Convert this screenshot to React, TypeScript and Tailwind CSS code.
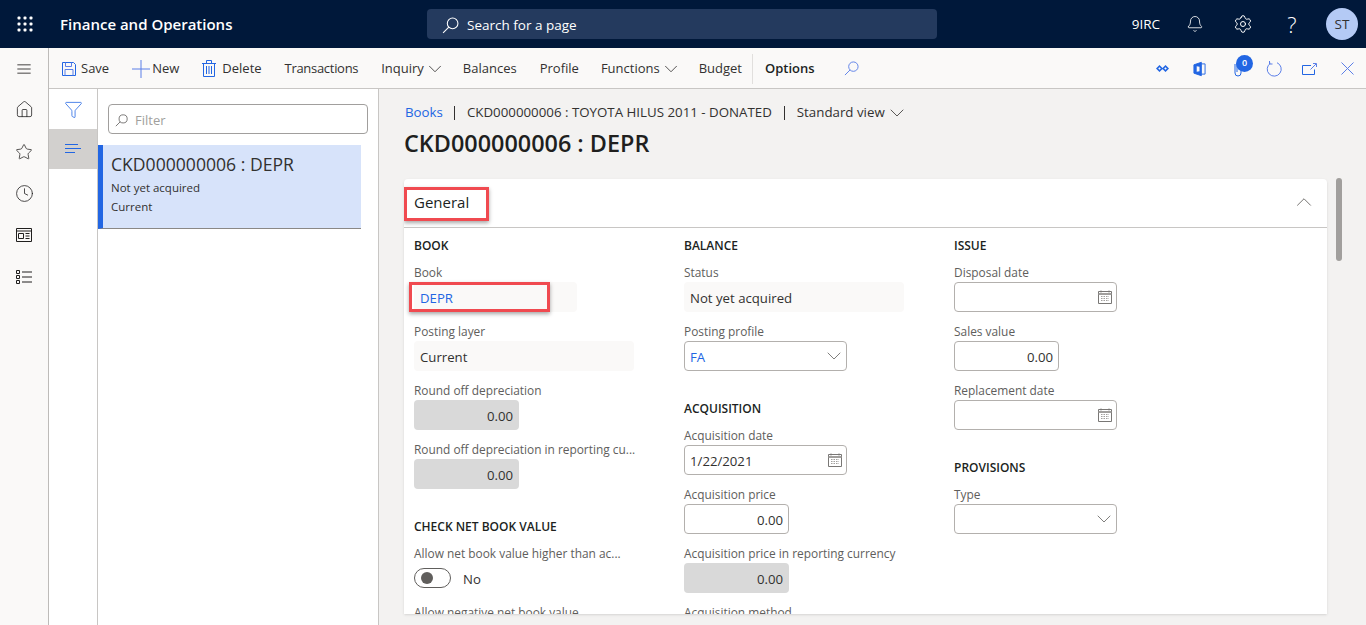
import { Bell, ChevronDown, ChevronUp, Clock, Filter, Home, Settings, Star } from "lucide-react";
import type { ReactNode } from "react";

function SearchGlyph({ className }: { className?: string }) {
  return (
    <svg viewBox="0 0 16 16" fill="none" stroke="currentColor" strokeWidth="1" className={className}>
      <circle cx="10" cy="6" r="5" />
      <path d="M6.4 9.6 1 15" />
    </svg>
  );
}

function Waffle() {
  const dots = [3, 9, 15];
  return (
    <svg viewBox="0 0 18 18" className="h-[18px] w-[18px] fill-white">
      {dots.map((y) => dots.map((x) => <rect key={`${x}-${y}`} x={x - 1.5} y={y - 1.5} width="3" height="3" rx="1" />))}
    </svg>
  );
}

function CalendarGlyph() {
  return (
    <svg viewBox="0 0 14 14" className="h-[14px] w-[14px] shrink-0 stroke-[#797775]" fill="none">
      <path d="M.5 1.500h13v12H.5z" />
      <path d="M.5 4h13" strokeWidth="2" stroke="#a19f9d" />
      <path d="M3 .5v2M11 .5v2" />
      <path d="M3 6.500h8M3 8.500h8M3 10.500h8" stroke="#a19f9d" strokeDasharray="1.500 1" />
    </svg>
  );
}

function Heading({ children, first }: { children: ReactNode; first?: boolean }) {
  return (
    <div
      className={`mb-2 h-[18px] text-[12px] font-semibold uppercase leading-[20px] text-[#201f1e] ${first ? "" : "mt-[28px]"}`}
    >
      {children}
    </div>
  );
}

function Label({ children }: { children: ReactNode }) {
  return <div className="h-5 whitespace-nowrap text-[11.9px] leading-5 text-[#605e5c]">{children}</div>;
}

function ReadOnly({ label, value, width, link }: { label: string; value: string; width: string; link?: boolean }) {
  return (
    <div className="mb-[9px]">
      <Label>{label}</Label>
      <div className={`flex h-[30px] items-center rounded-sm bg-[#faf9f8] px-1.5 pt-[3px] text-[13.2px] ${width} ${link ? "text-[#2266e3]" : "text-[#323130]"}`}>
        {value}
      </div>
    </div>
  );
}

function Disabled({ label }: { label: string }) {
  return (
    <div className="mb-[9px]">
      <Label>{label}</Label>
      <div className="flex h-[30px] w-[105px] items-center justify-end rounded-sm bg-[#d9d9d9] px-1.5 pt-[3px] text-[13.2px] text-[#323130]">
        0.00
      </div>
    </div>
  );
}

function Amount({ label }: { label: string }) {
  return (
    <div className="mb-[9px]">
      <Label>{label}</Label>
      <div className="flex h-[30px] w-[105px] items-center justify-end rounded-sm border border-[#b3b0ad] bg-white px-[5px] pt-[3px] text-[13.2px] text-[#323130]">
        0.00
      </div>
    </div>
  );
}

function DateField({ label, value }: { label: string; value?: string }) {
  return (
    <div className="mb-[9px]">
      <Label>{label}</Label>
      <div className="flex h-[30px] w-[163px] items-center justify-between rounded-sm border border-[#b3b0ad] bg-white pl-[5px] pr-[4px] text-[13.2px] text-[#323130]">
        <span className="pt-[3px]">{value}</span>
        <CalendarGlyph />
      </div>
    </div>
  );
}

function SelectField({ label, value }: { label: string; value?: string }) {
  return (
    <div className="mb-[9px]">
      <Label>{label}</Label>
      <div className="flex h-[30px] w-[163px] items-center justify-between rounded-sm border border-[#b3b0ad] bg-white pl-[5px] text-[13.2px] text-[#2266e3]">
        <span className="pt-[3px]">{value}</span>
        <ChevronDown className="h-6 w-6 text-[#605e5c]" strokeWidth={0.8} />
      </div>
    </div>
  );
}

function ToolItem({ children, bold, menu }: { children: ReactNode; bold?: boolean; menu?: boolean }) {
  return (
    <span className={`flex h-5 items-center whitespace-nowrap ${bold ? "font-semibold text-[#201f1e]" : "text-[#323130]"}`}>
      {children}
      {menu && <ChevronDown className="-mr-[6px] h-[22px] w-[22px] text-[#323130]" strokeWidth={0.9} />}
    </span>
  );
}

export default function App() {
  return (
    <div className="flex h-screen flex-col overflow-hidden bg-[#f3f2f1] font-['Open_Sans',sans-serif]">
      <header className="flex h-12 shrink-0 items-center bg-[#00183a] text-white">
        <div className="flex w-[49px] justify-center">
          <Waffle />
        </div>
        <div className="ml-[11px] w-[367px] text-[15px] font-semibold">Finance and Operations</div>
        <div className="flex h-[30px] w-[510px] items-center rounded-sm bg-[#243a5e] pl-[15px] pt-[2px] text-[13.5px] text-white">
          <SearchGlyph className="mr-2 h-[17px] w-[17px]" />
          Search for a page
        </div>
        <div className="ml-auto flex items-center pr-2">
          <span className="text-[13.5px]">9IRC</span>
          <Bell className="ml-[26px] h-[18px] w-[18px]" strokeWidth={1.1} />
          <Settings className="ml-[29px] h-5 w-5" strokeWidth={1.2} />
          <span className="ml-[32px] w-[14px] text-center text-[22px] font-light leading-none">?</span>
          <span className="ml-[27px] flex h-8 w-8 items-center justify-center rounded-full bg-[#b4caf5] text-[13.5px] text-[#323130]">
            ST
          </span>
        </div>
      </header>

      <div className="flex min-h-0 flex-1">
        <nav className="flex w-[49px] shrink-0 flex-col items-center border-r border-[#bdbbb9] bg-[#faf9f8] text-[#201f1e]">
          <svg viewBox="0 0 16 12" className="mt-[16px] h-[10px] w-[16px] stroke-[#201f1e]" fill="none">
            <path d="M0 1h16M0 6h16M0 11h16" />
          </svg>
          <Home className="mt-[26px] h-[19px] w-[19px]" strokeWidth={1} />
          <Star className="mt-[24px] h-[18px] w-[18px]" strokeWidth={1} />
          <Clock className="mt-[23px] h-[19px] w-[19px]" strokeWidth={1} />
          <svg viewBox="0 0 16 14" className="mt-[25px] h-[14px] w-[16px] stroke-[#201f1e]" fill="none">
            <path d="M.5.5h15v13H.5zM.5 3h15M2.500 5.500h5v5h-5zM9.500 5.500h4M9.500 8h4M9.500 10.500h4" />
          </svg>
          <svg viewBox="0 0 16 16" className="mt-[27px] h-[16px] w-[16px] stroke-[#201f1e]" fill="none">
            <path d="M.5 1.500h3v3h-3zM.5 6.500h3v3h-3zM.5 11.500h3v3h-3zM6 3h10M6 8h10M6 13h10" />
          </svg>
        </nav>

        <div className="flex min-w-0 flex-1 flex-col">
          <div className="flex h-[41px] shrink-0 items-center border-b border-[#c8c6c4] bg-[#faf9f8] pl-[12px] pr-[12px] pt-[1px] text-[13px]">
            <span className="flex items-center gap-[23px]">
              <ToolItem>
                <svg viewBox="0 0 16 16" className="mr-[4px] h-4 w-4 stroke-[#2266e3]" fill="none">
                  <path d="M1.500 1.500h11l2 2v11h-13z" />
                  <path d="M4.500 1.500v4h6v-4M4 14.500v-6h8v6" stroke="#5b7fe8" />
                </svg>
                Save
              </ToolItem>
              <ToolItem>
                <svg viewBox="0 0 18 18" className="mr-[2px] h-[18px] w-[18px] stroke-[#5b7fe8]" fill="none">
                  <path d="M9 0v18M0 9h18" />
                </svg>
                New
              </ToolItem>
              <ToolItem>
                <svg viewBox="0 0 14 17" className="mr-[6px] h-[17px] w-[14px] stroke-[#2266e3]" fill="none">
                  <path d="M0 3.500h14M4.500 3.500v-3h5v3M1.500 3.500v13h11v-13M4.500 6v8M7 6v8M9.500 6v8" />
                </svg>
                Delete
              </ToolItem>
              <ToolItem>
                <span className="tracking-[-0.3px]">Transactions</span>
              </ToolItem>
              <ToolItem menu>Inquiry</ToolItem>
              <ToolItem>Balances</ToolItem>
              <ToolItem>Profile</ToolItem>
              <span className="-ml-px">
                <ToolItem menu>Functions</ToolItem>
              </span>
              <ToolItem>Budget</ToolItem>
            </span>
            <span className="ml-[10px] h-[30px] w-px bg-[#e1dfdd]" />
            <span className="ml-[12px]">
              <ToolItem bold>Options</ToolItem>
            </span>
            <SearchGlyph className="ml-[29px] h-[15px] w-[15px] text-[#5b7fe8]" />
            <span className="ml-auto flex items-center text-[#2266e3]">
              <svg viewBox="0 0 13 7" className="h-[7px] w-[13px]" fill="currentColor" fillRule="evenodd">
                <path d="M3.500 0 7 3.500 3.500 7 0 3.500zm0 2.200L2.200 3.500l1.300 1.300 1.300-1.300zM9.500 0 13 3.500 9.500 7 6 3.500zm0 2.200L8.200 3.500l1.300 1.300 1.300-1.300z" />
              </svg>
              <svg viewBox="0 0 14 16" className="ml-[24px] h-[16px] w-[13px]" fill="none" stroke="currentColor">
                <path d="M1 3.500 9 .8v14.400l-8-2.700z" fill="currentColor" />
                <path d="M9 2.500h4v11H9" />
                <path d="M4 5v6l3-.6V5.600z" fill="#faf9f8" stroke="none" />
              </svg>
              <span className="relative ml-[28px] flex w-[8px] justify-center">
                <svg viewBox="0 0 8 16" className="h-[16px] w-[8px]" fill="none" stroke="currentColor">
                  <path d="M1 3v9a3 3 0 0 0 6 0V3a2 2 0 0 0-4 0v8" />
                </svg>
                <span className="absolute left-[2px] top-[-6px] flex h-[17px] w-[17px] items-center justify-center rounded-full bg-[#2266e3] text-[9px] font-semibold text-white">
                  0
                </span>
              </span>
              <svg viewBox="0 0 16 16" className="ml-[24px] h-[16px] w-[16px]" fill="none" stroke="#5b7fe8">
                <path d="M4.500 2.200A7 7 0 1 0 11 1.700" />
                <path d="M3.500 0v3h3" />
              </svg>
              <svg viewBox="0 0 15 12" className="ml-[20px] h-[12px] w-[15px]" fill="none" stroke="currentColor">
                <path d="M9 2.500H.5v9h12V6.500" />
                <path d="M8.500 6.500 14 1M11 .5h3.500V4" stroke="#5b7fe8" />
              </svg>
              <svg viewBox="0 0 13 13" className="ml-[24px] h-[13px] w-[13px]" fill="none" stroke="#5b7fe8">
                <path d="m.5.500 12 12M12.500.500l-12 12" />
              </svg>
            </span>
          </div>

          <div className="flex min-h-0 flex-1">
            <div className="flex w-[49px] shrink-0 flex-col items-center border-r border-[#c8c6c4] bg-white">
              <Filter className="mt-[11px] h-[19px] w-[19px] text-[#2266e3]" strokeWidth={1} />
              <div className="mt-[10px] flex h-10 w-full items-center justify-center bg-[#d2d0ce]">
                <svg viewBox="0 0 16 10" className="h-[10px] w-[16px] stroke-[#2266e3]" fill="none">
                  <path d="M0 .5h13M0 4.500h16M0 8.500h10" />
                </svg>
              </div>
            </div>

            <aside className="w-[281px] shrink-0 border-r border-[#c8c6c4] bg-white">
              <div className="mx-[10px] mt-[15px] flex h-[30px] w-[260px] items-center rounded-sm border border-[#a19f9d] px-1.5 pt-[3px] text-[13px] text-[#a19f9d]">
                <SearchGlyph className="mr-[7px] h-[13px] w-[13px] text-[#605e5c]" />
                Filter
              </div>
              <div className="mt-[11px] h-[84px] w-[263px] border-b border-b-[#8a8886] border-l-[5px] border-l-[#2266e3] bg-[#d7e3fa] pl-2 pt-[7px] text-[#323130]">
                <div className="text-[17.6px] leading-6">CKD000000006 : DEPR</div>
                <div className="mt-[2px] text-[11.5px] leading-[19px]">Not yet acquired</div>
                <div className="text-[11.5px] leading-[19px]">Current</div>
              </div>
            </aside>

            <main className="relative flex min-w-0 flex-1 flex-col pb-[11px] pl-[25px] pr-[39px]">
              <div className="ml-px mt-[14px] flex h-5 items-center whitespace-nowrap text-[13.3px] text-[#323130]">
                <span className="text-[#2266e3]">Books</span>
                <span className="ml-[11px] mr-[12px] h-[14px] w-px bg-[#323130]" />
                <span>CKD000000006 : TOYOTA HILUS 2011 - DONATED</span>
                <span className="mx-[12px] h-[14px] w-px bg-[#323130]" />
                <span>Standard view</span>
                <ChevronDown className="h-6 w-6" strokeWidth={0.8} />
              </div>
              <h1 className="mt-[2px] h-9 text-[23.4px] font-semibold leading-9 text-[#201f1e]">CKD000000006 : DEPR</h1>

              <section className="relative mt-[18px] min-h-0 flex-1 overflow-hidden rounded-t-sm bg-white shadow-sm">
                <div className="flex h-[49px] items-center justify-between border-b border-[#c8c6c4] pb-[2px] pl-[10px] pr-[10px]">
                  <h2 className="text-[15px] font-medium text-[#201f1e]">General</h2>
                  <ChevronUp className="h-[26px] w-[26px] text-[#605e5c]" strokeWidth={0.8} />
                </div>

                <div className="flex pl-[10px] pt-2">
                  <div className="w-[270px]">
                    <Heading first>Book</Heading>
                    <ReadOnly label="Book" value="DEPR" width="w-[163px]" link />
                    <ReadOnly label="Posting layer" value="Current" width="w-[220px]" />
                    <Disabled label="Round off depreciation" />
                    <Disabled label="Round off depreciation in reporting cu..." />
                    <Heading>Check net book value</Heading>
                    <Label>Allow net book value higher than ac...</Label>
                    <div className="mb-[9px] flex h-[30px] items-center gap-[12px] text-[13.2px] text-[#323130]">
                      <span className="flex h-5 w-[37px] items-center rounded-full border border-[#605e5c] pl-[6px]">
                        <span className="h-[12px] w-[12px] rounded-full bg-[#605e5c]" />
                      </span>
                      <span className="pt-[3px]">No</span>
                    </div>
                    <Label>Allow negative net book value</Label>
                  </div>

                  <div className="w-[270px]">
                    <Heading first>Balance</Heading>
                    <ReadOnly label="Status" value="Not yet acquired" width="w-[220px]" />
                    <SelectField label="Posting profile" value="FA" />
                    <Heading>Acquisition</Heading>
                    <DateField label="Acquisition date" value="1/22/2021" />
                    <Amount label="Acquisition price" />
                    <Disabled label="Acquisition price in reporting currency" />
                    <Label>Acquisition method</Label>
                  </div>

                  <div className="w-[270px]">
                    <Heading first>Issue</Heading>
                    <DateField label="Disposal date" />
                    <Amount label="Sales value" />
                    <DateField label="Replacement date" />
                    <Heading>Provisions</Heading>
                    <SelectField label="Type" />
                  </div>
                </div>

                <div className="absolute left-0 top-2 h-[34px] w-[85px] border-[3px] border-[#f04a50] shadow-[0_2px_4px_rgba(0,0,0,0.35)]" />
                <div className="absolute left-[5px] top-[103px] h-[30px] w-[141px] border-[3px] border-[#f04a50] shadow-[0_2px_4px_rgba(0,0,0,0.35)]" />
              </section>

              <div className="absolute right-[24px] top-[89px] h-[83px] w-[6px] rounded-full bg-[#a19f9d]" />
            </main>
          </div>
        </div>
      </div>
    </div>
  );
}
